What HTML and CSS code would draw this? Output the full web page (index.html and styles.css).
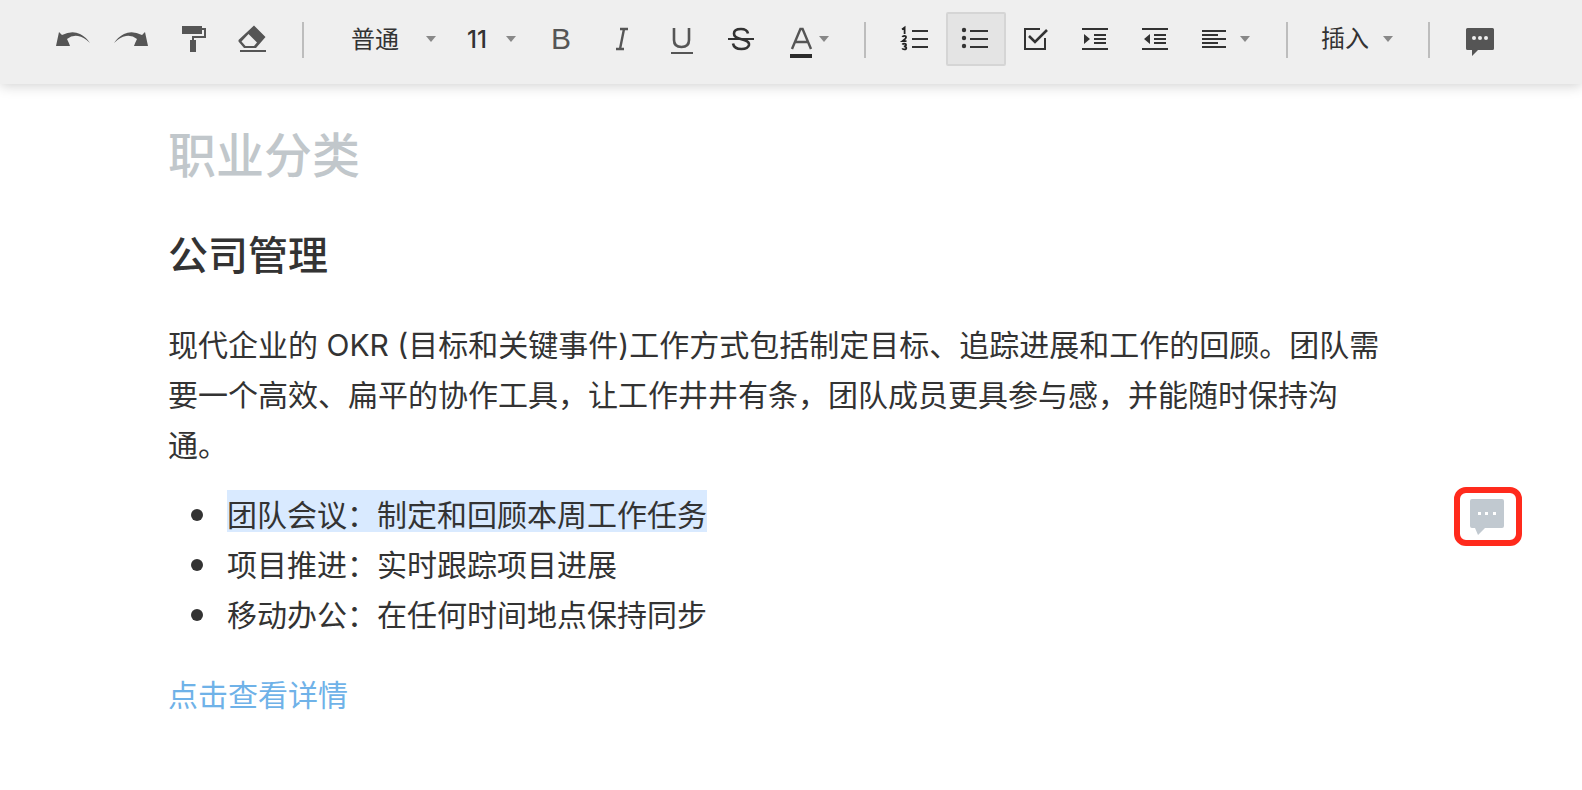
FILE: index.html
```html
<!DOCTYPE html>
<html lang="zh-CN">
<head>
<meta charset="utf-8">
<meta name="viewport" content="width=device-width, initial-scale=1">
<title>职业分类</title>
<link rel="stylesheet" href="styles.css">
</head>
<body>
<header class="toolbar" role="toolbar" aria-label="格式">
  <button class="tool" type="button" aria-label="撤销">
    <svg class="icon" viewBox="0 0 60 54"><path fill="#555" d="M14 34 17 20 20 23Q30 18 38 22Q44 25 48 31Q42 25 36 24Q30 23 25 27Q27 31 28 34Z"/></svg>
  </button>
  <button class="tool" type="button" aria-label="重做">
    <svg class="icon" viewBox="0 0 60 54"><path fill="#555" d="M46 34 43 20 40 23Q30 18 22 22Q16 25 12 31Q18 25 24 24Q30 23 35 27Q33 31 32 34Z"/></svg>
  </button>
  <button class="tool" type="button" aria-label="格式刷">
    <svg class="icon" viewBox="0 0 60 54"><path fill="#555" d="M20 14H40V22H20ZM28 28H34V40H28Z"/><path fill="none" stroke="#555" stroke-width="2" d="M40 17H43V25H31V28"/></svg>
  </button>
  <button class="tool" type="button" aria-label="清除格式">
    <svg class="icon" viewBox="0 0 60 54"><path fill="#555" fill-rule="evenodd" d="M32 13.500 43.500 25 34 36H22L16.500 29.500V28ZM26.500 22 19.500 29.500 23.500 34H32L35 30.500Z"/><path fill="#555" d="M18 38H44V40H18Z"/></svg>
  </button>
  <span class="divider"></span>
  <label class="picker picker-style">
    <select class="picker-field" aria-label="段落样式"><option>普通</option></select>
    <svg class="caret" viewBox="0 0 10 6"><path fill="#888" d="M0 0H10L5 6Z"/></svg>
  </label>
  <label class="picker picker-size">
    <select class="picker-field" aria-label="字号"><option>11</option></select>
    <svg class="caret" viewBox="0 0 10 6"><path fill="#888" d="M0 0H10L5 6Z"/></svg>
  </label>
  <button class="tool glyph" type="button" aria-label="加粗">B</button>
  <button class="tool" type="button" aria-label="斜体">
    <svg class="icon" viewBox="0 0 60 54"><path fill="none" stroke="#555" stroke-width="2.400" d="M28 17H36M24 37H32M32 17 28 37"/></svg>
  </button>
  <button class="tool" type="button" aria-label="下划线">
    <svg class="icon" viewBox="0 0 60 54"><path fill="none" stroke="#555" stroke-width="2.600" d="M22 16V28Q22 35 29.500 35Q37 35 37 28V16"/><path fill="#555" d="M19 40H41V42H19Z"/></svg>
  </button>
  <button class="tool" type="button" aria-label="删除线">
    <svg class="icon" viewBox="0 0 60 54"><path fill="none" stroke="#333" stroke-width="2.600" d="M36 21.500Q35 17 29 17Q22 17 22 21.500Q22 25 27 26.500L32 28Q37.500 29.500 37 33Q36 37 29.500 37Q22 37 21 31.500"/><path fill="#333" d="M16 26H42V28H16Z"/></svg>
  </button>
  <button class="tool tool-color" type="button" aria-label="文字颜色">
    <svg class="swatch" viewBox="0 0 24 54"><path fill="none" stroke="#555" stroke-width="2.400" d="M3 37 11.400 17H13.600L22 37M6 30H19"/><path fill="#2b2b2b" d="M1 42H23V46H1Z"/></svg>
    <svg class="caret" viewBox="0 0 10 6"><path fill="#888" d="M0 0H10L5 6Z"/></svg>
  </button>
  <span class="divider"></span>
  <button class="tool" type="button" aria-label="编号列表">
    <svg class="icon" viewBox="0 0 60 54"><path fill="#333" d="M26 18H42V20H26ZM26 26H42V28H26ZM26 34H42V36H26Z"/><path fill="none" stroke="#222" stroke-width="1.800" d="M16 17.500 18.600 15.500V22M16.400 25Q16.800 23.800 18.300 23.800Q20 23.800 20 25.300Q20 26.500 16.500 29.200H20.500M16.300 32.500Q17 31.600 18.300 31.600Q20 31.600 20 33Q20 34.300 17.800 34.300Q20.300 34.300 20.300 36Q20.300 37.400 18.300 37.400Q16.800 37.400 16.200 36.400"/></svg>
  </button>
  <button class="tool tool-active" type="button" aria-label="项目符号列表" aria-pressed="true">
    <svg class="icon" viewBox="2 2 56 50"><path fill="#333" d="M24 18H42V20H24ZM24 26H42V28H24ZM24 34H42V36H24Z"/><circle cx="18" cy="18" r="2.200" fill="#333"/><circle cx="18" cy="26" r="2.200" fill="#333"/><circle cx="18" cy="34" r="2.200" fill="#333"/></svg>
  </button>
  <button class="tool" type="button" aria-label="任务列表">
    <svg class="icon" viewBox="0 0 60 54"><path fill="none" stroke="#333" stroke-width="2" d="M34 17H19V37H39V26"/><path fill="none" stroke="#333" stroke-width="2.600" d="M23 24 29 30 41 18"/></svg>
  </button>
  <button class="tool" type="button" aria-label="增加缩进">
    <svg class="icon" viewBox="0 0 60 54"><path fill="#333" d="M16 16H42V18H16ZM16 36H42V38H16ZM28 22H40V24H28ZM28 26H40V28H28ZM28 30H40V32H28ZM18 22 24 27 18 32Z"/></svg>
  </button>
  <button class="tool" type="button" aria-label="减少缩进">
    <svg class="icon" viewBox="0 0 60 54"><path fill="#333" d="M16 16H42V18H16ZM16 36H42V38H16ZM28 22H40V24H28ZM28 26H40V28H28ZM28 30H40V32H28ZM24 22 18 27 24 32Z"/></svg>
  </button>
  <button class="tool tool-align" type="button" aria-label="对齐">
    <svg class="align-icon" viewBox="0 0 24 54"><path fill="#333" d="M0 18H24V20H0ZM0 22H16V24H0ZM0 26H24V28H0ZM0 30H16V32H0ZM0 34H24V36H0Z"/></svg>
    <svg class="caret" viewBox="0 0 10 6"><path fill="#888" d="M0 0H10L5 6Z"/></svg>
  </button>
  <span class="divider"></span>
  <button class="tool tool-insert" type="button"><span class="tool-label">插入</span>
    <svg class="caret" viewBox="0 0 10 6"><path fill="#888" d="M0 0H10L5 6Z"/></svg>
  </button>
  <span class="divider"></span>
  <button class="tool" type="button" aria-label="评论">
    <svg class="icon" viewBox="0 0 60 54"><path fill="#555" d="M17.500 16H42.500Q44 16 44 17.500V36.500Q44 38 42.500 38H28L22 44V38H17.500Q16 38 16 36.500V17.500Q16 16 17.500 16Z"/><g fill="#efefef"><circle cx="24" cy="26" r="2"/><circle cx="30" cy="26" r="2"/><circle cx="36" cy="26" r="2"/></g></svg>
  </button>
</header>
<main class="document">
  <h1 class="title">职业分类</h1>
  <h2 class="heading">公司管理</h2>
  <p class="paragraph">现代企业的 OKR (目标和关键事件)工作方式包括制定目标、追踪进展和工作的回顾。团队需要一个高效、扁平的协作工具，让工作井井有条，团队成员更具参与感，并能随时保持沟通。</p>
  <ul class="list">
    <li class="item"><mark class="selected">团队会议：制定和回顾本周工作任务</mark></li>
    <li class="item">项目推进：实时跟踪项目进展</li>
    <li class="item">移动办公：在任何时间地点保持同步</li>
  </ul>
  <button class="comment" type="button" aria-label="添加评论">
    <svg class="comment-icon" viewBox="0 0 34 36"><path fill="#c1c9d0" d="M2 0H32Q34 0 34 2V27Q34 29 32 29H15L8 36 5 29H2Q0 29 0 27V2Q0 0 2 0Z"/><path fill="#fff" d="M8 13H11V16H8ZM15 13H18V16H15ZM23 13H26V16H23Z"/></svg>
  </button>
  <a class="link" href="#">点击查看详情</a>
</main>
</body>
</html>
```
FILE: styles.css
```css
* {
  box-sizing: border-box;
}

body {
  margin: 0;
  background: #fff;
  color: #333;
  font-family: Inter, "Noto Sans CJK SC", sans-serif;
}

.toolbar {
  display: flex;
  align-items: center;
  height: 84px;
  padding: 0 42px 6px;
  background: #efefef;
  box-shadow: 0 2px 12px rgba(0, 0, 0, 0.18);
}

.tool {
  display: flex;
  flex: none;
  align-items: center;
  justify-content: center;
  width: 60px;
  height: 54px;
  padding: 0;
  border: 0;
  background: none;
  color: #333;
  font: inherit;
}

.tool-active {
  border: 2px solid #d5d5d5;
  border-radius: 2px;
  background: #e4e4e4;
}

.glyph {
  padding-right: 2px;
  color: #555;
  font-family: "Liberation Sans", sans-serif;
  font-size: 30px;
}

.icon {
  width: 100%;
  height: 100%;
}

.caret {
  flex: none;
  width: 10px;
  height: 6px;
}

.tool-color {
  justify-content: flex-start;
  gap: 6px;
  width: 72px;
  padding-left: 17px;
}

.swatch,
.align-icon {
  flex: none;
  width: 24px;
  height: 54px;
}

.tool-align {
  justify-content: flex-start;
  gap: 14px;
  width: 80px;
  padding-left: 16px;
}

.tool-insert {
  gap: 14px;
  width: 100px;
  padding-right: 2px;
  font-size: 24px;
}

.tool-label {
  line-height: 30px;
}

.divider {
  flex: none;
  width: 2px;
  height: 36px;
  margin: 2px 20px 0;
  background: #bdbdbd;
}

.picker {
  display: grid;
  flex: none;
  align-items: center;
  height: 54px;
}

.picker > * {
  grid-area: 1 / 1;
}

.picker .caret {
  justify-self: end;
  margin-right: 16px;
  pointer-events: none;
}

.picker-style {
  width: 128px;
  padding-left: 27px;
}

.picker-size {
  width: 80px;
  padding-left: 15px;
}

.picker-field {
  width: 100%;
  height: 54px;
  padding: 0;
  border: 0;
  appearance: none;
  background: none;
  color: #333;
  font: inherit;
  font-size: 24px;
}

.picker-size .picker-field {
  font-weight: 500;
}

.document {
  display: grid;
  grid-template-columns: 1fr 194px;
  padding: 40px 0 60px 168px;
  font-size: 30px;
  line-height: 50px;
}

.document > * {
  grid-column: 1;
}

.title {
  margin: 0;
  color: #c1c7cb;
  font-size: 48px;
  font-weight: 500;
  line-height: 64px;
}

.heading {
  margin: 40px 0 36px;
  font-size: 40px;
  font-weight: 500;
  line-height: 56px;
}

.paragraph {
  margin: 0;
}

.list {
  grid-row: 4;
  margin: 20px 0 30px;
  padding: 0;
  list-style: none;
}

.item {
  display: flex;
  align-items: center;
  min-height: 50px;
}

.item::before {
  content: "";
  width: 12px;
  height: 12px;
  margin: 0 24px 0 23px;
  border-radius: 50%;
  background: #333;
}

.selected {
  align-self: flex-start;
  padding-top: 8px;
  background: #d9eaff;
  color: inherit;
  line-height: 34px;
}

.document > .comment {
  display: grid;
  grid-row: 4;
  grid-column: 2;
  place-items: center;
  place-self: start end;
  width: 68px;
  height: 59px;
  margin: 17px 60px 0 0;
  padding: 0 2px 0 0;
  border: 6px solid #ff2a1c;
  border-radius: 12px;
  background: #fff;
}

.comment-icon {
  width: 34px;
  height: 36px;
}

.link {
  justify-self: start;
  color: #6fb2e8;
  text-decoration: none;
}
```
